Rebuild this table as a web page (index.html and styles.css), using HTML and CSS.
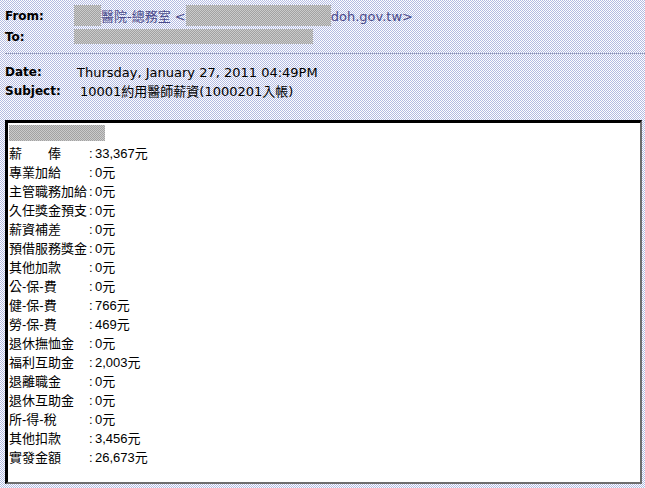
FILE: index.html
```html
<!doctype html>
<html lang="zh-Hant">
  <head>
    <meta charset="utf-8">
    <title>10001約用醫師薪資(1000201入帳)</title>
    <link rel="stylesheet" href="styles.css">
  </head>
  <body>
    <div class="head">
      <div class="field">
        <span class="name">From:</span>
        <span class="val sender"><span class="redact r-from1"></span>醫院-總務室 &lt;<span class="redact r-from2"></span>doh.gov.tw&gt;</span>
      </div>
      <div class="field">
        <span class="name">To:</span>
        <span class="val"><span class="redact r-to"></span></span>
      </div>
    </div>

    <hr class="sep">

    <div class="meta">
      <div class="field">
        <span class="name">Date:</span>
        <span class="val date">Thursday, January 27, 2011 04:49PM</span>
      </div>
      <div class="field">
        <span class="name">Subject:</span>
        <span class="val subject">10001約用醫師薪資(1000201入帳)</span>
      </div>
    </div>

    <div class="message">
      <div class="redact r-name"></div>
      <div class="pay">
        <span>薪　　俸</span><span>:</span><span>33,367元</span>
        <span>專業加給</span><span>:</span><span>0元</span>
        <span>主管職務加給</span><span>:</span><span>0元</span>
        <span>久任獎金預支</span><span>:</span><span>0元</span>
        <span>薪資補差</span><span>:</span><span>0元</span>
        <span>預借服務獎金</span><span>:</span><span>0元</span>
        <span>其他加款</span><span>:</span><span>0元</span>
        <span>公-保-費</span><span>:</span><span>0元</span>
        <span>健-保-費</span><span>:</span><span>766元</span>
        <span>勞-保-費</span><span>:</span><span>469元</span>
        <span>退休撫恤金</span><span>:</span><span>0元</span>
        <span>福利互助金</span><span>:</span><span>2,003元</span>
        <span>退離職金</span><span>:</span><span>0元</span>
        <span>退休互助金</span><span>:</span><span>0元</span>
        <span>所-得-稅</span><span>:</span><span>0元</span>
        <span>其他扣款</span><span>:</span><span>3,456元</span>
        <span>實發金額</span><span>:</span><span>26,673元</span>
      </div>
    </div>
  </body>
</html>
```

FILE: styles.css
```css
html {
  margin: 0;
  /* 1px checker dither, like the old mail client */
  --dither: url("data:image/svg+xml,%3Csvg xmlns='http://www.w3.org/2000/svg' width='2' height='2' shape-rendering='crispEdges'%3E%3Crect width='2' height='2' fill='%23fff'/%3E%3Crect width='1' height='1' fill='%23b3bbe2'/%3E%3Crect x='1' y='1' width='1' height='1' fill='%23b3bbe2'/%3E%3C/svg%3E");
  --redact: url("data:image/svg+xml,%3Csvg xmlns='http://www.w3.org/2000/svg' width='2' height='2' shape-rendering='crispEdges'%3E%3Crect width='2' height='2' fill='%23cbcbcb'/%3E%3Crect width='1' height='1' fill='%23a2a2a2'/%3E%3Crect x='1' y='1' width='1' height='1' fill='%23a2a2a2'/%3E%3C/svg%3E");
}

body {
  margin: 0;
  height: 488px;
  overflow: hidden;
  background: #d9ddf0 var(--dither) 0 0 / 2px 2px;
  color: #000;
  font-family: "DejaVu Sans", "Noto Sans CJK TC", sans-serif;
  font-size: 12px;
}

.head {
  padding: 6px 0 0 5px;
  line-height: 21px;
}

.meta {
  padding-left: 5px;
  line-height: 19px;
}

.field {
  display: flex;
}

.name {
  width: 69px;
  flex: none;
  font-weight: bold;
}

.val {
  font-size: 13px;
}

.sender {
  color: #4a4a8a;
}

.date {
  padding-left: 3px;
}

.subject {
  padding-left: 6px;
}

.redact {
  display: inline-block;
  vertical-align: top;
  background: #b6b6b6 var(--redact) 0 0 / 2px 2px;
}

.r-from1 {
  width: 27px;
  height: 21px;
  margin-top: -1px;
}

.r-from2 {
  width: 145px;
  height: 21px;
  margin-top: -1px;
}

.r-to {
  width: 239px;
  height: 15px;
  margin-top: 2px;
}

.sep {
  margin: 5px 0 9px 5px;
  height: 0;
  border: none;
  border-top: 1px dotted #8a90aa;
}

.message {
  box-sizing: border-box;
  width: 637px;
  height: 364px;
  margin: 19px 0 0 5px;
  padding: 0 0 0 1px;
  background: #fff;
  border-top: 3px solid #000;
  border-left: 3px solid #000;
  border-right: 2px solid #6e6e6e;
  border-bottom: 2px solid #6e6e6e;
  font-family: "Liberation Sans", "Noto Sans CJK TC", sans-serif;
  font-size: 13px;
}

.r-name {
  display: block;
  width: 96px;
  height: 16px;
  margin: 2px 0 3px;
}

.pay {
  display: grid;
  grid-template-columns: 80px 6px auto;
  line-height: 19px;
  white-space: nowrap;
}
```
